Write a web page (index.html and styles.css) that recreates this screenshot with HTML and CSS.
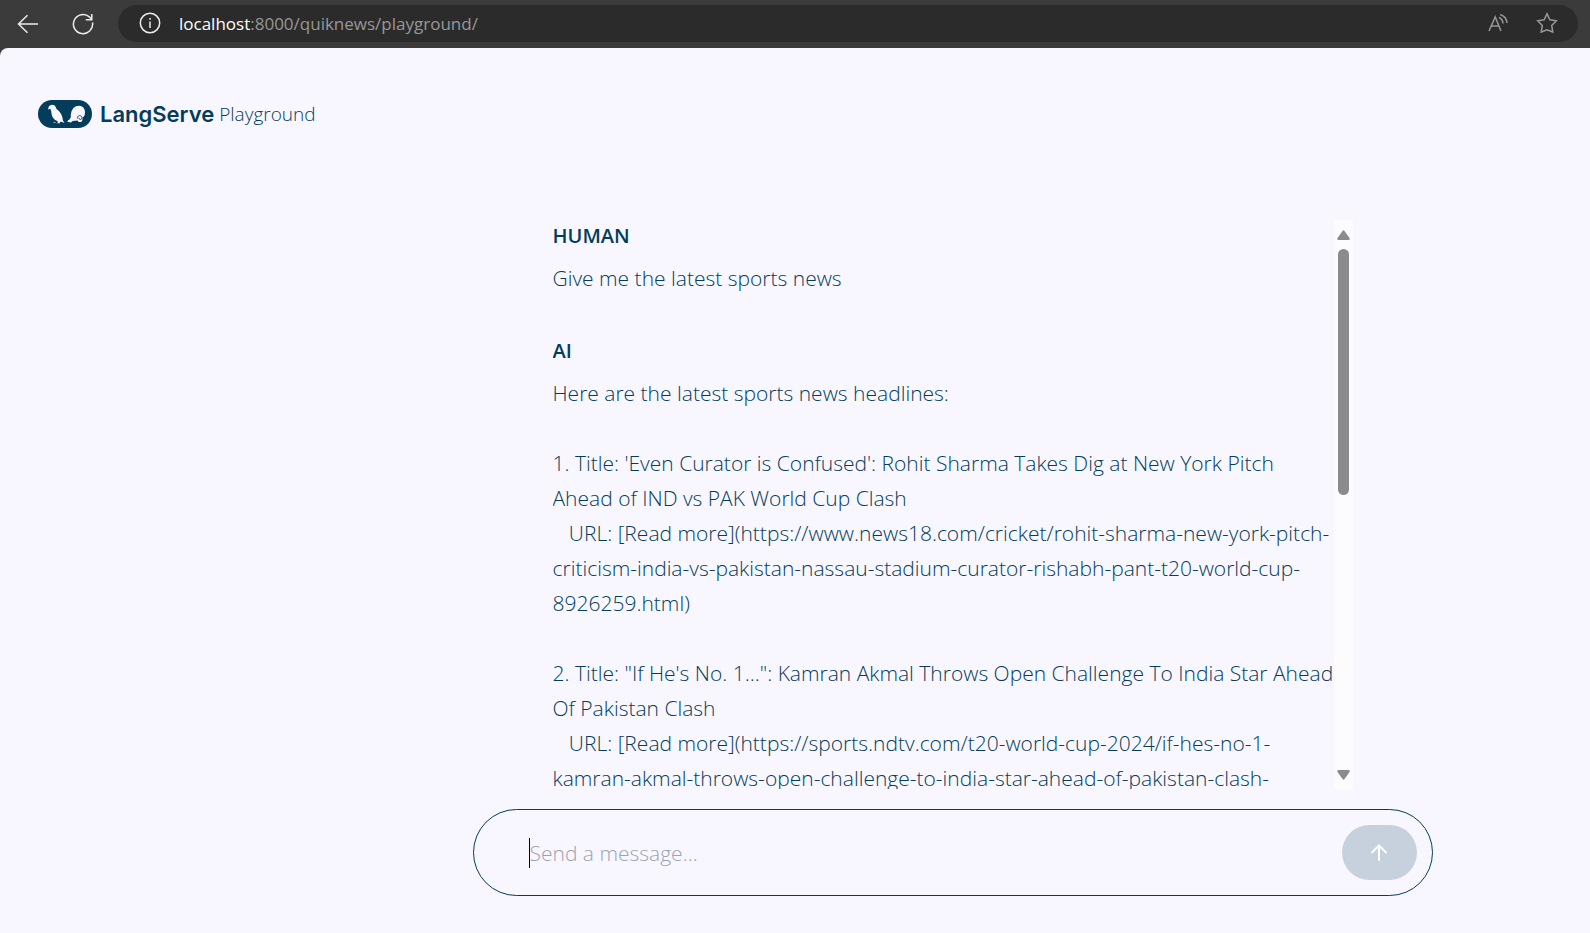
FILE: index.html
```html
<!DOCTYPE html>
<html lang="en">
<head>
<meta charset="utf-8">
<title>LangServe Playground</title>
<link rel="stylesheet" href="styles.css">
</head>
<body>
<nav class="toolbar">
  <button class="tool" aria-label="Back"><svg width="22" height="20" viewBox="0 0 22 20"><path d="M21 10H1.500M10.500 1.200L1.500 10l9 8.800"/></svg></button>
  <button class="tool" aria-label="Refresh"><svg width="22" height="22" viewBox="0 0 22 22"><path d="M20.500 9.500A9.600 9.600 0 1 1 17.600 4.100L19.500 6.200M19.800 1v5.800h-6"/></svg></button>
  <div class="address">
    <svg class="info" width="22" height="22" viewBox="0 0 22 22"><circle cx="11" cy="11" r="9.700"/><path d="M11 9.500v6.500M11 6v1.800"/></svg>
    <span class="url"><b>localhost</b>:8000/quiknews/playground/</span>
    <button class="mark" aria-label="Read aloud"><svg width="20" height="20" viewBox="0 0 20 20"><path d="M1 18L7.200 4l5.800 14M3.300 13h7.700M11 4.500q3.600 1.500 4 6M12.200 1.500q6.300 2 6.800 8.500"/></svg></button>
    <button class="mark" aria-label="Add to favorites"><svg width="22" height="22" viewBox="0 0 22 22"><path d="M11 1.800l2.900 6 6.400.900-4.600 4.700 1.100 6.600-5.800-2.300L5.200 20l1.100-6.600L1.700 8.700l6.400-.900z"/></svg></button>
  </div>
</nav>
<div class="page">
  <header class="brand">
    <svg class="logo" width="54" height="28" viewBox="0 0 54 28"><rect width="54" height="28" rx="14" fill="#043d5c"/><path fill="#f8f7ff" d="M10 9.500Q10.500 5 14 4.700q3.500 0 4.500 4.300 5.500 3.500 6.500 11.500l1.500 2.500-3-1.300-1.800.3.600 1.200h-4l1.800-.7-.8-1.500q-5-1.500-5.800-7.500-.1-3-1.300-4.800zM17 22.200l-2.500.8h3.500zM29.300 22q.3-2.400 2.500-2.800 1.600-1.400 1-4.700Q34 6 41 5.800q5.700.4 6 6.200 0 4.500-2.500 5.500.3 3.700-1.500 4.500h-2.300l-1.200-1.500-5 .5-1.500 1.500-2.300-.5z"/><path d="M39.500 18.500q-.5-2.500 2-3 2.500.2 2.500 2.300-.2 2-1.800 1.700-1.500-.3-1.200-1.700" fill="none" stroke="#043d5c" stroke-width=".8"/></svg>
    <h1 class="name">LangServe</h1>
    <span class="sub">Playground</span>
  </header>
  <main class="chat">
    <div class="scroller">
      <div class="messages">
        <section class="message">
          <h2 class="role">HUMAN</h2>
          <p class="text">Give me the latest sports news</p>
        </section>
        <section class="message">
          <h2 class="role">AI</h2>
          <p class="text">Here are the latest sports news headlines:

1. Title: 'Even Curator is Confused': Rohit Sharma Takes Dig at New York Pitch
Ahead of IND vs PAK World Cup Clash
   URL: [Read more](https://www.news18.com/cricket/rohit-sharma-new-york-pitch-
criticism-india-vs-pakistan-nassau-stadium-curator-rishabh-pant-t20-world-cup-
8926259.html)

2. Title: "If He's No. 1...": Kamran Akmal Throws Open Challenge To India Star Ahead
Of Pakistan Clash
   URL: [Read more](https://sports.ndtv.com/t20-world-cup-2024/if-hes-no-1-
kamran-akmal-throws-open-challenge-to-india-star-ahead-of-pakistan-clash-</p>
        </section>
      </div>
      <div class="scrollbar">
        <svg class="arrow" width="13" height="10" viewBox="0 0 13 10"><path d="M5.500 1Q6.500-.3 7.500 1l5 7q.8 2-1 2h-10q-1.800 0-1-2z"/></svg>
        <div class="track"><div class="thumb"></div></div>
        <svg class="arrow" width="13" height="10" viewBox="0 0 13 10"><path d="M5.500 9q1 1.300 2 0l5-7q.8-2-1-2h-10q-1.800 0-1 2z"/></svg>
      </div>
    </div>
    <form class="composer">
      <input class="field" type="text" aria-label="Message" placeholder="Send a message...">
      <button class="send" type="button" aria-label="Send"><svg width="18" height="18" viewBox="0 0 18 18"><path d="M9 17V1.500M1.500 9L9 1.500 16.500 9"/></svg></button>
    </form>
  </main>
</div>
</body>
</html>
```
FILE: styles.css
```css
* { box-sizing: border-box; }
html, body { height: 100%; }
body {
  margin: 0;
  display: flex;
  flex-direction: column;
  background: #3b3b3b;
  color: #043d5c;
  font-family: "Open Sans", "Noto Sans", sans-serif;
  font-weight: 300;
  overflow: hidden;
}
button { border: 0; padding: 0; background: none; display: flex; align-items: center; justify-content: center; }
h1, h2, p { margin: 0; }

.toolbar { display: flex; align-items: center; height: 48px; padding: 0 12px 0 0; flex: none; }
.toolbar svg { fill: none; stroke: #ececec; stroke-width: 1.5; }
.tool { width: 55px; height: 46px; }
.tool + .tool { margin-right: 8px; }
.address {
  flex: 1;
  display: flex;
  align-items: center;
  height: 37px;
  padding: 0 20px 0 21px;
  margin-bottom: 2px;
  border-radius: 19px;
  background: #2b2b2b;
}
.url { flex: 1; margin-left: 18px; color: #979797; font-size: 17px; font-weight: 400; }
.url b { color: #fff; font-weight: 400; }
.toolbar .mark { margin-left: 28px; }
.toolbar .mark svg { stroke: #979797; }

.page {
  flex: 1;
  min-height: 0;
  display: flex;
  gap: 40px;
  padding: 0 38px 37px;
  border-radius: 8px 0 0 0;
  background: #f8f7ff;
}
.brand { flex: none; display: flex; align-items: center; width: 275px; height: 28px; margin-top: 52px; }
.logo { flex: none; }
.name { margin-left: 8px; font: 600 22px "Inter", sans-serif; }
.sub { margin-left: 5px; font-size: 19px; }

.chat { flex: 1; min-width: 0; max-width: 960px; margin: 0 auto; padding-top: 172px; display: flex; flex-direction: column; }
.scroller { flex: 1; min-height: 0; display: flex; margin: 0 80px 20px; }
.messages { flex: 1; min-width: 0; overflow: hidden; }
.message { margin-bottom: 39px; }
.role { font-size: 20px; line-height: 32px; font-weight: 600; margin-bottom: 9px; }
.text { font-size: 21px; line-height: 35px; white-space: pre; }

.scrollbar { width: 19px; flex: none; display: flex; flex-direction: column; align-items: center; padding: 10px 0 9px; background: #fcfcfc; }
.arrow { flex: none; fill: #8b8b8b; }
.track { flex: 1; width: 11px; padding: 9px 0; }
.thumb { height: 48%; border-radius: 6px; background: #8b8b8b; }

.composer {
  display: flex;
  align-items: center;
  height: 87px;
  padding: 0 15px 0 55px;
  border: 1px solid #043d5c;
  border-radius: 44px;
}
.field {
  flex: 1;
  height: 30px;
  padding: 0;
  border: 0;
  border-left: 1px solid #000;
  outline: 0;
  background: none;
  color: #043d5c;
  font: inherit;
  font-size: 21px;
}
.field::placeholder { color: #9ca3af; }
.send { width: 75px; height: 55px; border-radius: 28px; background: #c7d1de; }
.send svg { fill: none; stroke: #fff; stroke-width: 2; }
```
